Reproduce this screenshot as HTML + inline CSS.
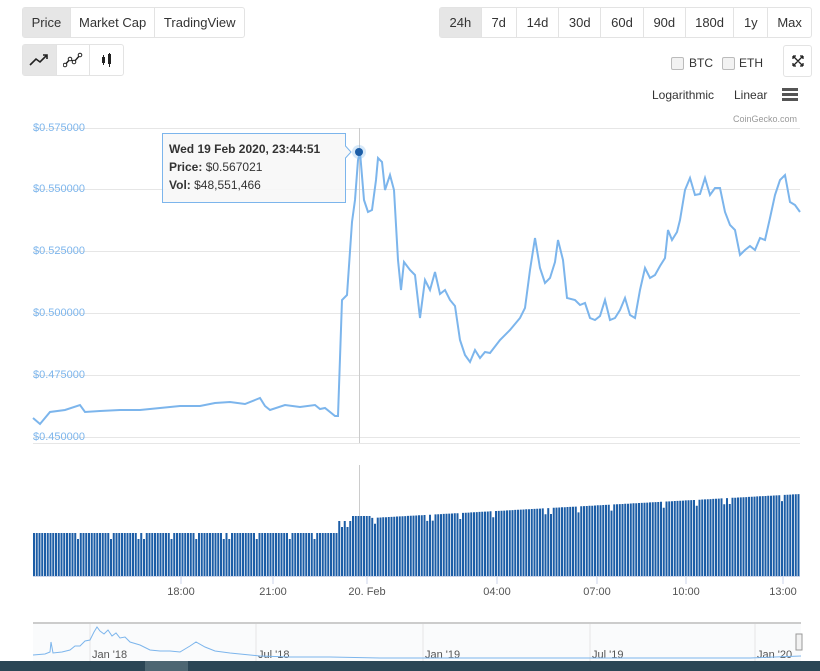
<!DOCTYPE html>
<html><head><meta charset="utf-8"><style>
body{margin:0;width:820px;height:671px;background:#fff;font-family:"Liberation Sans",sans-serif;position:relative;overflow:hidden;color:#333}
.grp{position:absolute;display:flex;border:1px solid #e3e3e3;border-radius:3px;height:29px;font-size:13px}
.grp div{display:flex;align-items:center;justify-content:center;border-right:1px solid #e3e3e3;color:#333}
.grp div:last-child{border-right:none}
.act{background:#e6e6e6}
.t{position:absolute;white-space:nowrap}
</style></head><body>
<div class="grp" style="left:22px;top:7px;width:221px">
 <div class="act" style="width:47px">Price</div><div style="width:84px">Market Cap</div><div style="width:89px">TradingView</div>
</div>
<div class="grp" style="left:22px;top:44px;width:100px;height:30px">
 <div class="act" style="width:33px"><svg width="20" height="14"><path d="M1 12 L7 6 L11 9 L18 2 M14 2 L18 2 L18 6" stroke="#222" stroke-width="1.6" fill="none"/></svg></div>
 <div style="width:33px"><svg width="20" height="16"><path d="M2 13 L7 7 L11 10 L17 3" stroke="#222" stroke-width="1.4" fill="none"/><circle cx="2" cy="13" r="1.8" fill="#fff" stroke="#222"/><circle cx="7" cy="7" r="1.8" fill="#fff" stroke="#222"/><circle cx="11" cy="10" r="1.8" fill="#fff" stroke="#222"/><circle cx="17" cy="3" r="1.8" fill="#fff" stroke="#222"/></svg></div>
 <div style="width:33px"><svg width="14" height="16"><rect x="2" y="5" width="3" height="6" fill="#222"/><line x1="3.5" y1="3" x2="3.5" y2="13" stroke="#222"/><rect x="8" y="2" width="3" height="10" fill="#222"/><line x1="9.5" y1="1" x2="9.5" y2="15" stroke="#222"/></svg></div>
</div>
<div class="grp" style="left:439px;top:7px;width:371px">
 <div class="act" style="width:41px">24h</div><div style="width:34px">7d</div><div style="width:42px">14d</div><div style="width:41px">30d</div><div style="width:42px">60d</div><div style="width:41px">90d</div><div style="width:48px">180d</div><div style="width:33px">1y</div><div style="width:43px">Max</div>
</div>
<div class="grp" style="left:783px;top:45px;width:27px;height:30px"><div style="width:27px"><svg width="12" height="12"><path d="M1 1L11 11M11 1L1 11M1 1h3M1 1v3M11 1h-3M11 1v3M1 11h3M1 11v-3M11 11h-3M11 11v-3" stroke="#222" stroke-width="1.3" fill="none"/></svg></div></div>
<div style="position:absolute;left:671px;top:57px;width:11px;height:11px;border:1px solid #bbb;border-radius:2px;background:#f2f2f2"></div>
<div class="t" style="left:689px;top:56px;font-size:12px">BTC</div>
<div style="position:absolute;left:722px;top:57px;width:11px;height:11px;border:1px solid #bbb;border-radius:2px;background:#f2f2f2"></div>
<div class="t" style="left:739px;top:56px;font-size:12px">ETH</div>
<div class="t" style="left:652px;top:88px;font-size:12px">Logarithmic</div>
<div class="t" style="left:734px;top:88px;font-size:12px">Linear</div>
<div style="position:absolute;left:782px;top:88px;width:16px;height:3px;background:#555;box-shadow:0 5px 0 #555,0 10px 0 #555"></div>
<div class="t" style="left:733px;top:114px;font-size:9px;color:#999">CoinGecko.com</div>
<svg id="c" width="820" height="671" style="position:absolute;left:0;top:0"></svg>
<div style="position:absolute;left:0;top:661px;width:820px;height:10px;background:#2b4655"></div>
<div style="position:absolute;left:145px;top:661px;width:43px;height:10px;background:#4d6672"></div>
<script>
(function(){
var s='';
var ys=[[128,'0.575000'],[189,'0.550000'],[251,'0.525000'],[313,'0.500000'],[375,'0.475000'],[437,'0.450000']];
ys.forEach(function(a){s+='<line x1="33" x2="800" y1="'+(a[0]+.5)+'" y2="'+(a[0]+.5)+'" stroke="#e6e6e6"/><text x="33" y="'+(a[0]+3)+'" font-size="11" fill="#7cb5ec" font-family="Liberation Sans">$'+a[1]+'</text>';});
s+='<line x1="33" x2="800" y1="443.5" y2="443.5" stroke="#e6e6e6"/>';
s+='<line x1="359.5" x2="359.5" y1="128" y2="443" stroke="#ccc"/><line x1="359.5" x2="359.5" y1="465" y2="576" stroke="#ccc"/>';
var p=[33,418,40,424,50,412,65,410,80,405,85,412,100,411,120,410,140,410,160,408,180,406,200,406,215,403,230,402,245,404,255,400,260,398,265,406,270,410,285,405,300,407,315,405,320,409,325,408,335,416,338,416,342,300,347,295,352,222,355,200,358,160,360,152,364,200,368,212,372,210,376,180,378,158,382,162,385,190,390,175,394,190,398,260,401,290,404,262,410,270,415,275,420,318,425,280,430,290,435,272,440,294,445,290,450,300,455,306,460,340,465,355,470,362,475,350,480,358,485,352,490,353,500,340,510,330,520,318,525,308,530,270,535,238,540,268,545,283,550,278,555,262,558,240,563,260,567,298,575,300,580,305,585,303,590,318,595,320,600,316,605,300,610,320,615,318,620,310,625,298,630,315,635,318,640,290,645,268,650,278,655,275,660,266,665,258,668,230,672,240,677,232,680,220,685,190,690,178,695,195,700,194,705,178,710,195,715,188,720,188,725,212,730,225,735,230,740,255,745,250,750,246,755,250,760,238,765,240,770,218,775,195,780,180,785,175,790,202,795,205,800,212];
var d='M';for(var i=0;i<p.length;i+=2)d+=p[i]+' '+p[i+1]+' ';
s+='<path d="'+d+'" stroke="#7cb5ec" stroke-width="2" fill="none"/>';
var b='';
function barTop(x){var h;if(x<338)h=533;else if(x<350)h=521;else if(x<370)h=516;else h=518-(x-370)/430*24;
 return h+((Math.sin(x*1.7)*Math.cos(x*.37))>0.7?6:0);}
for(var x=33;x<800;x+=2.75){var t=barTop(x);b+='M'+x.toFixed(2)+' '+t.toFixed(1)+'h2V576h-2Z';}
s+='<path d="'+b+'" fill="#1c5da6"/>';
s+='<line x1="33" x2="800" y1="576.5" y2="576.5" stroke="#ccd6eb"/>';
[[181,'18:00'],[273,'21:00'],[367,'20. Feb'],[497,'04:00'],[597,'07:00'],[686,'10:00'],[783,'13:00']].forEach(function(a){s+='<line x1="'+a[0]+'" x2="'+a[0]+'" y1="577" y2="584" stroke="#ccd6eb"/><text x="'+a[0]+'" y="595" font-size="11" text-anchor="middle" fill="#555" font-family="Liberation Sans">'+a[1]+'</text>';});
s+='<rect x="33" y="623" width="768" height="38" fill="#fafbfc"/><line x1="33" x2="801" y1="623" y2="623" stroke="#ccc" stroke-width="2"/>';
[[90,"Jan '18"],[256,"Jul '18"],[423,"Jan '19"],[590,"Jul '19"],[755,"Jan '20"]].forEach(function(a){var xx=a[0];s+='<line x1="'+xx+'" x2="'+xx+'" y1="624" y2="661" stroke="#e6e6e6"/><text x="'+(xx+2)+'" y="658" font-size="11" fill="#555" font-family="Liberation Sans">'+a[1]+'</text>';});
s+='<path d="M33 655 L45 654 L50 652 L51 642 L53 653 L62 652 L70 650 L75 646 L80 646 L85 641 L90 640 L94 632 L97 627 L100 631 L104 634 L108 630 L112 636 L116 633 L120 638 L125 637 L130 642 L140 645 L150 650 L160 651 L170 651 L180 652 L190 646 L196 642 L205 647 L215 651 L230 653 L250 655 L260 656 L290 657 L330 657 L380 658 L450 658 L550 658 L650 658 L750 658 L801 656" stroke="#7cb5ec" fill="none"/>';
s+='<rect x="796" y="634" width="6" height="16" fill="#f2f2f2" stroke="#999"/>';
s+='<circle cx="359" cy="152" r="7" fill="#7cb5ec" opacity=".3"/><circle cx="359" cy="152" r="4" fill="#1c5da6"/>';
s+='<path d="M162.5 133.5H345.5V146L351 152L345.5 158V202.5H162.5Z" fill="#f7f7f7" fill-opacity=".9" stroke="#7cb5ec"/>';
s+='<text x="169" y="153" font-size="12" font-family="Liberation Sans" fill="#333"><tspan font-weight="bold">Wed 19 Feb 2020, 23:44:51</tspan><tspan x="169" dy="18" font-weight="bold">Price:</tspan> $0.567021<tspan x="169" dy="18" font-weight="bold">Vol:</tspan> $48,551,466</text>';
document.getElementById('c').innerHTML=s;
})();
</script>
</body></html>
